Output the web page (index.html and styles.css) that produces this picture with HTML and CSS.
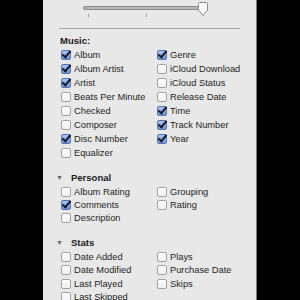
FILE: index.html
```html
<!DOCTYPE html>
<html>
<head>
    <title>View Options</title>
    <link rel="stylesheet" href="styles.css">
</head>
<body>
    <div class="panel">
        <div class="slider">
            <svg width="130" height="20" viewBox="0 0 130 20">
                <rect x="0.5" y="5.5" width="122" height="3" rx="1.5" fill="#b8b8b8" stroke="#8a8a8a"/>
                <line x1="5.5" y1="13" x2="5.5" y2="16" stroke="#999"/>
                <line x1="63.5" y1="13" x2="63.5" y2="16" stroke="#999"/>
                <path d="M115.5 2.5 Q115.5 1.5 116.5 1.5 L123.5 1.5 Q124.5 1.5 124.5 2.5 L124.5 9 L120 14.5 L115.5 9 Z" fill="#fafafa" stroke="#8c8c8c"/>
            </svg>
        </div>
        <div class="divider"></div>

        <div class="section">
            <div class="title">Music:</div>
            <div class="grid music">
                <div class="col">
                    <label class="row"><span class="box on"></span>Album</label>
                    <label class="row"><span class="box on"></span>Album Artist</label>
                    <label class="row"><span class="box on"></span>Artist</label>
                    <label class="row"><span class="box"></span>Beats Per Minute</label>
                    <label class="row"><span class="box"></span>Checked</label>
                    <label class="row"><span class="box"></span>Composer</label>
                    <label class="row"><span class="box on"></span>Disc Number</label>
                    <label class="row"><span class="box"></span>Equalizer</label>
                </div>
                <div class="col">
                    <label class="row"><span class="box on"></span>Genre</label>
                    <label class="row"><span class="box"></span>iCloud Download</label>
                    <label class="row"><span class="box"></span>iCloud Status</label>
                    <label class="row"><span class="box"></span>Release Date</label>
                    <label class="row"><span class="box on"></span>Time</label>
                    <label class="row"><span class="box on"></span>Track Number</label>
                    <label class="row"><span class="box on"></span>Year</label>
                </div>
            </div>
        </div>

        <div class="section">
            <div class="title disclosure"><span class="tri">&#9660;</span>Personal</div>
            <div class="grid">
                <div class="col">
                    <label class="row"><span class="box"></span>Album Rating</label>
                    <label class="row"><span class="box on"></span>Comments</label>
                    <label class="row"><span class="box"></span>Description</label>
                </div>
                <div class="col">
                    <label class="row"><span class="box"></span>Grouping</label>
                    <label class="row"><span class="box"></span>Rating</label>
                </div>
            </div>
        </div>

        <div class="section">
            <div class="title disclosure"><span class="tri">&#9660;</span>Stats</div>
            <div class="grid">
                <div class="col">
                    <label class="row"><span class="box"></span>Date Added</label>
                    <label class="row"><span class="box"></span>Date Modified</label>
                    <label class="row"><span class="box"></span>Last Played</label>
                    <label class="row"><span class="box"></span>Last Skipped</label>
                </div>
                <div class="col">
                    <label class="row"><span class="box"></span>Plays</label>
                    <label class="row"><span class="box"></span>Purchase Date</label>
                    <label class="row"><span class="box"></span>Skips</label>
                </div>
            </div>
        </div>
    </div>
</body>
</html>
```

FILE: styles.css
```css
body {
    margin: 0;
    background-color: #000;
    font-family: "Liberation Sans", Arial, sans-serif;
}
.panel {
    margin-left: 43px;
    width: 214px;
    height: 300px;
    overflow: hidden;
    background-color: #e8e8e8;
    border-right: 1px solid #7a7a7a;
    padding: 0 16px 0 18px;
    box-sizing: border-box;
}
.slider {
    height: 20px;
    padding-left: 22px;
    padding-top: 1px;
}
.slider svg {
    display: block;
}
.divider {
    margin-top: 7px;
    margin-left: -2px;
    height: 1px;
    background-color: #a9a9a9;
    width: 181px;
}
.section {
    margin-top: 5px;
}
.section + .section {
    margin-top: 11px;
}
.title {
    font-size: 9.5px;
    font-weight: bold;
    color: #1a1a1a;
    height: 14px;
    line-height: 14px;
    margin-left: -1px;
}
.disclosure {
    display: flex;
    align-items: center;
}
.tri {
    font-size: 7px;
    color: #6a6a6a;
    width: 15px;
    margin-left: -4px;
}
.grid {
    display: grid;
    grid-template-columns: 96px 1fr;
}
.row {
    display: flex;
    align-items: center;
    height: 13.4px;
    font-size: 9.3px;
    color: #1e1e1e;
    white-space: nowrap;
}
.music .row {
    height: 14px;
}
.box {
    width: 8px;
    height: 8px;
    border: 1px solid #a2a2a2;
    border-radius: 2px;
    background: linear-gradient(#fdfdfd, #f0f0f0);
    margin-right: 3px;
    position: relative;
}
.box.on {
    border-color: #5b73a6;
    background: linear-gradient(#a9c3ef, #6f95da);
}
.box.on::after {
    content: "";
    position: absolute;
    left: 2px;
    top: -2px;
    width: 3px;
    height: 7px;
    border: solid #151a2a;
    border-width: 0 2px 2px 0;
    transform: rotate(40deg);
}
```
